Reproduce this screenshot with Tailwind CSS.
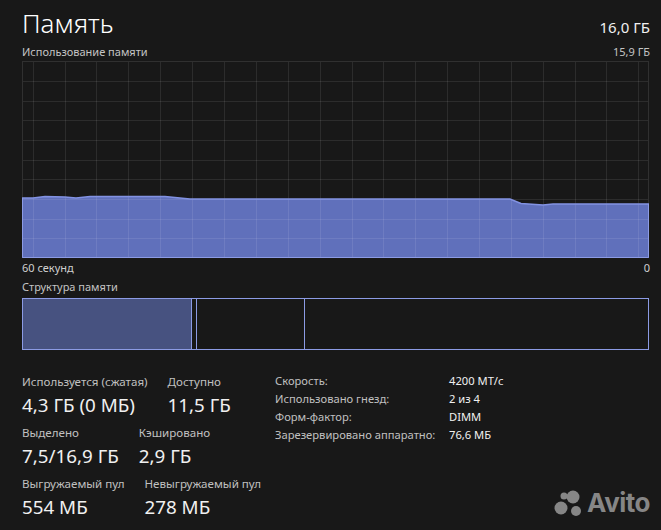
<!DOCTYPE html>
<html>
  <head>
    <meta charset="utf-8" />
    <script src="https://cdn.jsdelivr.net/npm/@tailwindcss/browser@4"></script>
  </head>
  <body class="bg-[#181818]">
    <div class="relative w-[661px] h-[530px] overflow-hidden bg-[#181818] pl-[22px] pr-[12px] pt-[7px] text-[#f0f0f0] font-['Noto_Sans','Open_Sans',sans-serif]">
      <!-- header -->
      <div class="flex justify-between items-center h-[33px]">
        <h1 class="text-[26px] leading-[33px] font-light text-white">Память</h1>
        <span class="text-[15px] leading-[32px] mt-[6px] -mr-[1px]">16,0 ГБ</span>
      </div>
      <div class="flex justify-between text-[11px] leading-[15px] text-[#c4c4c4] mt-[4px] h-[17px]">
        <span>Использование памяти</span>
        <span class="-mr-[1px]">15,9 ГБ</span>
      </div>

      <!-- usage graph -->
      <svg class="block w-[627px] h-[197px]" viewBox="0 0 627 197">
        <rect x="0.5" y="0.5" width="626" height="196" fill="#181818" stroke="#303030" />
        <polygon fill="#6070bb" points="0,137 11,137 23,135.5 43,136 54,137 68,135.5 143,135.5 168,138 488,138 499,142.5 521,144 531,143 627,143 627,197 0,197" />
        <g stroke="#ffffff" stroke-opacity="0.09">
          <path d="M11.5 1V196M43.5 1V196M74.5 1V196M106.5 1V196M138.5 1V196M170.5 1V196M202.5 1V196M234.5 1V196M266.5 1V196M298.5 1V196M330.5 1V196M361.5 1V196M393.5 1V196M425.5 1V196M457.5 1V196M489.5 1V196M521.5 1V196M553.5 1V196M584.5 1V196M616.5 1V196" />
          <path d="M1 20.5H626M1 40.5H626M1 59.5H626M1 79.5H626M1 99.5H626M1 118.5H626M1 138.5H626M1 158.5H626M1 177.5H626" />
        </g>
        <polyline fill="none" stroke="#8292e2" stroke-width="1.5" points="0,137 11,137 23,135.5 43,136 54,137 68,135.5 143,135.5 168,138 488,138 499,142.5 521,144 531,143 627,143" />
        <path d="M0.5 137V196.5H626.5V143" fill="none" stroke="#8c9be4" />
      </svg>
      <div class="flex justify-between text-[11px] leading-[15px] text-[#d0d0d0] mt-[2px]">
        <span>60 секунд</span>
        <span class="-mr-[1px]">0</span>
      </div>

      <!-- memory composition -->
      <div class="text-[11px] leading-[15px] text-[#c4c4c4] mt-[4px]">Структура памяти</div>
      <div class="flex h-[52px] mt-[4px] border border-[#8c9be4]">
        <div class="w-[169px] bg-[#475280] border-r border-[#8c9be4]"></div>
        <div class="w-[5px] bg-[#181818] border-r border-[#8c9be4]"></div>
        <div class="w-[108px] border-r border-[#8c9be4]"></div>
      </div>

      <!-- stats -->
      <div class="flex mt-[24px]">
        <div class="w-[253px] flex flex-col">
          <div class="flex gap-[20px] h-[51px]">
            <div>
              <div class="text-[11.6px] leading-[15px] text-[#c0c0c0]">Используется (сжатая)</div>
              <div class="text-[18.8px] leading-[26px] mt-[3px]">4,3 ГБ (0 МБ)</div>
            </div>
            <div>
              <div class="text-[11.6px] leading-[15px] text-[#c0c0c0]">Доступно</div>
              <div class="text-[18.8px] leading-[26px] mt-[3px]">11,5 ГБ</div>
            </div>
          </div>
          <div class="flex gap-[20px] h-[51px]">
            <div>
              <div class="text-[11.6px] leading-[15px] text-[#c0c0c0]">Выделено</div>
              <div class="text-[18.8px] leading-[26px] mt-[3px]">7,5/16,9 ГБ</div>
            </div>
            <div>
              <div class="text-[11.6px] leading-[15px] text-[#c0c0c0]">Кэшировано</div>
              <div class="text-[18.8px] leading-[26px] mt-[3px]">2,9 ГБ</div>
            </div>
          </div>
          <div class="flex gap-[20px] h-[51px]">
            <div>
              <div class="text-[11.6px] leading-[15px] text-[#c0c0c0]">Выгружаемый пул</div>
              <div class="text-[18.8px] leading-[26px] mt-[3px]">554 МБ</div>
            </div>
            <div>
              <div class="text-[11.6px] leading-[15px] text-[#c0c0c0]">Невыгружаемый пул</div>
              <div class="text-[18.8px] leading-[26px] mt-[3px]">278 МБ</div>
            </div>
          </div>
        </div>
        <div class="grid grid-cols-[174px_1fr] auto-rows-[18px] text-[11.2px] leading-[18px] mt-[-2px] h-[72px]">
          <span class="text-[#c0c0c0]">Скорость:</span><span>4200 МТ/с</span>
          <span class="text-[#c0c0c0]">Использовано гнезд:</span><span>2 из 4</span>
          <span class="text-[#c0c0c0]">Форм-фактор:</span><span>DIMM</span>
          <span class="text-[#c0c0c0]">Зарезервировано аппаратно:</span><span>76,6 МБ</span>
        </div>
      </div>

      <!-- watermark -->
      <div class="absolute left-[553px] top-[487px] flex items-center text-[#868686]">
        <svg class="w-[34px] h-[32px] block" viewBox="0 0 34 32" fill="currentColor">
          <circle cx="11" cy="9" r="3.5" />
          <circle cx="20" cy="10" r="6.5" />
          <circle cx="8" cy="21" r="6.5" />
          <circle cx="23" cy="24" r="5" />
        </svg>
        <span class="font-['Inter',sans-serif] font-bold text-[26px] leading-[32px] tracking-[-0.5px]">Avito</span>
      </div>
    </div>
  </body>
</html>
